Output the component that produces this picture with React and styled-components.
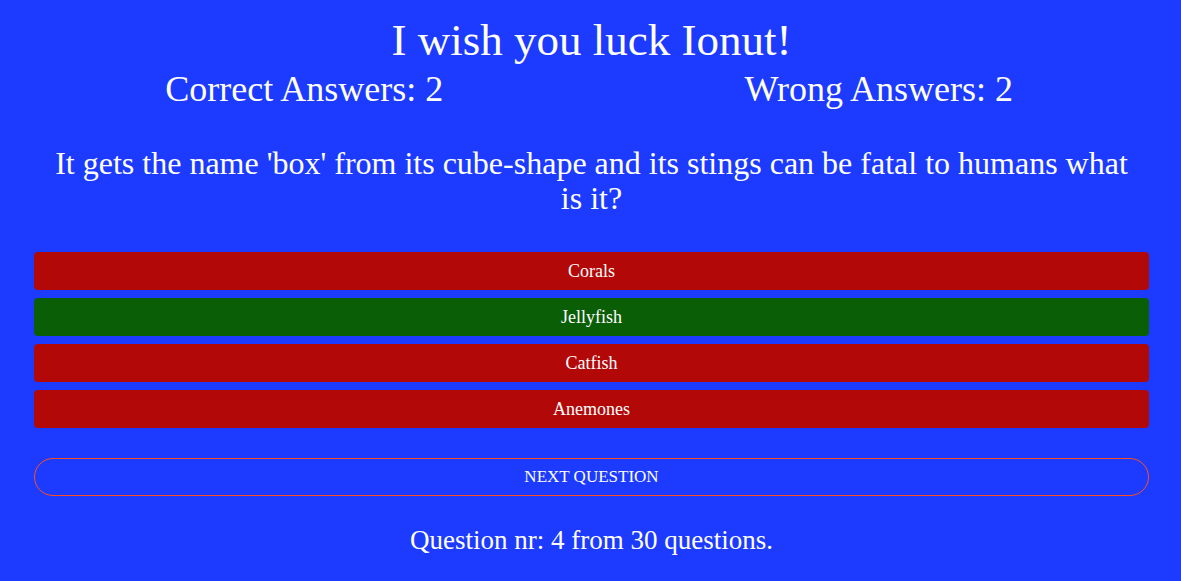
import styled, { createGlobalStyle } from 'styled-components';

const GlobalStyle = createGlobalStyle`
  html, body {
    margin: 0;
    padding: 0;
    background: #1c3bff;
  }
  body {
    font-family: "Liberation Serif", "Times New Roman", serif;
    color: #ffffff;
  }
`;

const Page = styled.div`
  min-height: 581px;
  background: #1c3bff;
  padding: 14px 32px 0 34px;
  box-sizing: border-box;
  text-align: center;
`;

const Title = styled.h1`
  margin: 0;
  font-size: 45px;
  font-weight: 400;
  line-height: 52px;
`;

const Score = styled.div`
  display: grid;
  grid-template-columns: 1fr 1fr;
  margin: 0 -17px;
  font-size: 36px;
  line-height: 46px;
`;

const Question = styled.h2`
  margin: 34px 0 36px;
  padding: 0 14px;
  font-size: 32px;
  font-weight: 400;
  line-height: 35px;
`;

const Answers = styled.div`
  display: flex;
  flex-direction: column;
  gap: 8px;
`;

const Answer = styled.button`
  height: 38px;
  border: none;
  border-radius: 4px;
  background: ${p => (p.$correct ? '#0a5e05' : '#b20808')};
  color: #ffffff;
  font-family: inherit;
  font-size: 18px;
  cursor: pointer;
`;

const NextButton = styled.button`
  width: 100%;
  height: 38px;
  margin-top: 30px;
  border: 1px solid #ff4f1f;
  border-radius: 19px;
  background: transparent;
  color: #ffffff;
  font-family: inherit;
  font-size: 17px;
  text-transform: uppercase;
  cursor: pointer;
`;

const Footer = styled.p`
  margin: 24px 0 0;
  font-size: 27px;
  line-height: 40px;
`;

const answers = [
  { text: 'Corals', correct: false },
  { text: 'Jellyfish', correct: true },
  { text: 'Catfish', correct: false },
  { text: 'Anemones', correct: false },
];

export default function App() {
  return (
    <>
      <GlobalStyle />
      <Page>
        <Title>I wish you luck Ionut!</Title>
        <Score>
          <span>Correct Answers: 2</span>
          <span>Wrong Answers: 2</span>
        </Score>
        <Question>
          It gets the name 'box' from its cube-shape and its stings can be fatal to humans what is it?
        </Question>
        <Answers>
          {answers.map(a => (
            <Answer key={a.text} $correct={a.correct}>
              {a.text}
            </Answer>
          ))}
        </Answers>
        <NextButton>Next question</NextButton>
        <Footer>Question nr: 4 from 30 questions.</Footer>
      </Page>
    </>
  );
}
